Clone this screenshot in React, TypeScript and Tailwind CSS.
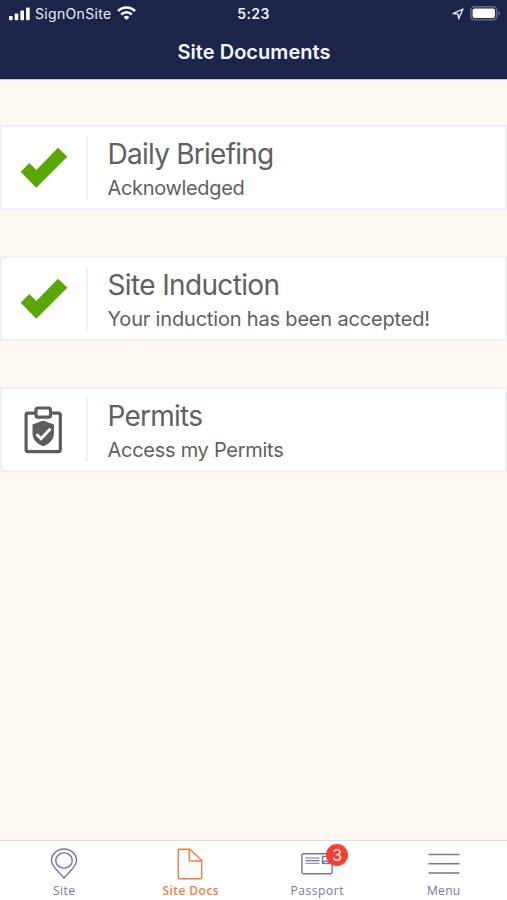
import type { ReactNode } from "react";

function StatusBar() {
  return (
    <div className="grid h-[27px] grid-cols-3 items-center text-[14px] leading-none text-[#e9eefb]">
      <div className="flex items-center pl-[9px]">
        <svg width="21" height="14" viewBox="0 0 21 14" fill="#fff">
          <rect x="0" y="9" width="3.6" height="4.2" rx="0.8" />
          <rect x="5.7" y="6.5" width="3.6" height="6.7" rx="0.8" />
          <rect x="11.4" y="3.5" width="3.6" height="9.7" rx="0.8" />
          <rect x="17.1" y="0.4" width="3.6" height="12.8" rx="0.8" />
        </svg>
        <span className="ml-[5px] w-[82px] whitespace-nowrap tracking-[0.32px]">SignOnSite</span>
        <svg width="19" height="15" viewBox="0 0 19 15" fill="none" stroke="#fff" strokeWidth="2.5">
          <path d="M1 5a12 12 0 0 1 17 0" />
          <path d="M4.2 8.5a7.5 7.5 0 0 1 10.6 0" />
          <path d="M6.7 11.2a4 4 0 0 1 5.6 0L9.5 14z" fill="#fff" stroke="none" />
        </svg>
      </div>
      <div className="text-center font-semibold tracking-[0.4px]">5:23</div>
      <div className="flex items-center justify-end pr-[6px]">
        <svg width="12" height="12" viewBox="0 0 12 12" fill="none" stroke="#e9eefb" strokeWidth="1.3" strokeLinejoin="round">
          <path d="M1 5.6 11 1 6.6 11 6.1 6.2z" />
        </svg>
        <svg className="ml-[6px]" width="31" height="15" viewBox="0 0 31 15">
          <rect x="0.8" y="0.8" width="26" height="13" rx="3.8" fill="none" stroke="#656b8b" strokeWidth="1.5" />
          <rect x="2.6" y="2.6" width="22.4" height="9.4" rx="2" fill="#fff" />
          <path d="M28.3 5.2c2.4.8 2.4 3.6 0 4.4z" fill="#656b8b" />
        </svg>
      </div>
    </div>
  );
}

function Check() {
  return (
    <svg width="48" height="42" viewBox="0 0 48 42">
      <path d="M.7 24.7 9.3 16l7 7L38 .7l9.3 9-31 31z" fill="#58a704" />
    </svg>
  );
}

function Clipboard() {
  return (
    <svg className="mr-px" width="39" height="48" viewBox="0 0 39 48" fill="none" stroke="#5c5c5c" strokeWidth="3.2">
      <path d="M11 7.2H3.6a1.5 1.5 0 0 0-1.5 1.5v35.4a1.5 1.5 0 0 0 1.5 1.5h31.2a1.5 1.5 0 0 0 1.5-1.5V8.7a1.5 1.5 0 0 0-1.5-1.5H27" />
      <rect x="12" y="2" width="14.5" height="9.2" rx="2" />
      <path d="M19.2 14.4 29.9 18.6v8.8c0 6-4.5 10.4-10.7 12.9C13 37.8 8.5 33.4 8.5 27.4v-8.8z" fill="#5c5c5c" stroke="none" />
      <path d="m12.5 28.2 4.6 4.5 9.3-10" stroke="#fff" strokeWidth="3" />
    </svg>
  );
}

type CardProps = { icon: ReactNode; title: string; detail: string; titleClass: string; detailClass: string };

function DocumentCard({ icon, title, detail, titleClass, detailClass }: CardProps) {
  return (
    <section className="flex h-[85px] items-center border-2 border-[#eff1f4] bg-white text-[#606060]">
      <div className="flex h-[64px] w-[86px] shrink-0 items-center justify-center border-r-2 border-[#f1f2f5]">{icon}</div>
      <div className="pt-[2px] pl-[19.5px] whitespace-nowrap">
        <h2 className={`text-[28px] leading-[38px] font-[380] ${titleClass}`}>{title}</h2>
        <p className={`text-[20px] leading-[30px] ${detailClass}`}>{detail}</p>
      </div>
    </section>
  );
}

function Tab({ icon, label, className }: { icon: ReactNode; label: string; className: string }) {
  return (
    <div className={`flex w-[126.5px] flex-col items-center pt-[6px] ${className}`}>
      <div className="flex h-[34px] shrink-0 items-center">{icon}</div>
      <span className="font-['Open_Sans',sans-serif] text-[12px] leading-[20px] whitespace-nowrap">{label}</span>
    </div>
  );
}

export default function App() {
  return (
    <div className="flex h-[900px] w-full flex-col overflow-hidden bg-[#fff9f4] font-['Inter',sans-serif]">
      <header className="h-[79px] shrink-0 bg-[#1b2549]">
        <StatusBar />
        <h1 className="pt-[10px] pl-px text-center text-[20px] leading-[30px] font-semibold tracking-[0.04px] text-[#f4f7ff]">Site Documents</h1>
      </header>
      <main className="flex flex-1 flex-col gap-[46px] border-t border-[#c5c9d1] pt-[45px]">
        <DocumentCard icon={<Check />} title="Daily Briefing" detail="Acknowledged" titleClass="tracking-[-0.75px]" detailClass="tracking-[-0.34px]" />
        <DocumentCard icon={<Check />} title="Site Induction" detail="Your induction has been accepted!" titleClass="tracking-[-0.64px]" detailClass="tracking-[-0.18px]" />
        <DocumentCard icon={<Clipboard />} title="Permits" detail="Access my Permits" titleClass="tracking-[-0.75px]" detailClass="tracking-[-0.27px]" />
      </main>
      <nav className="flex h-[60px] shrink-0 border-t border-[#dfdfe0] bg-white pl-px">
        <Tab
          label="Site"
          className="font-medium tracking-[0.5px] text-[#7376a3]"
          icon={
            <svg width="28" height="32" viewBox="0 0 28 32" fill="none" stroke="currentColor" strokeWidth="1.4">
              <path d="M14 30C10 25 1.5 19 1.5 12.5a12.5 11.5 0 0 1 25 0C26.5 19 18 25 14 30z" />
              <ellipse cx="14" cy="12.5" rx="8.3" ry="7.6" />
            </svg>
          }
        />
        <Tab
          label="Site Docs"
          className="font-semibold tracking-[0.45px] text-[#f27c3c]"
          icon={
            <svg className="mr-[2px]" width="26" height="32" viewBox="0 0 26 32" fill="none" stroke="currentColor" strokeWidth="1.4" strokeLinejoin="round">
              <path d="M2.5 1.2H13L24.7 12.5v16.8a1.5 1.5 0 0 1-1.5 1.5H2.7a1.5 1.5 0 0 1-1.5-1.5V2.5a1.3 1.3 0 0 1 1.3-1.3z" />
              <path d="M12.2 1.2v10.3a1.5 1.5 0 0 0 1.5 1.5h11" />
            </svg>
          }
        />
        <Tab
          label="Passport"
          className="font-medium tracking-[0.55px] text-[#7376a3]"
          icon={
            <div className="relative">
              <svg width="32" height="23" viewBox="0 0 32 23" fill="none" stroke="currentColor" strokeWidth="1.4">
                <rect x="0.9" y="0.8" width="30.2" height="20" rx="1.5" />
                <path d="M4.5 5h14M4.5 7.6h14M4.5 10.2h14" strokeWidth="1.1" />
                <rect x="21.5" y="3.5" width="7" height="7" />
                <path d="M22 9.8c1-2.5 5-2.5 6 0" />
              </svg>
              <span className="absolute -top-[9px] left-[25px] flex h-[22px] w-[22px] items-center justify-center rounded-full bg-[#fe3c30] text-[16px] leading-none font-normal tracking-normal text-white">3</span>
            </div>
          }
        />
        <Tab
          label="Menu"
          className="font-medium tracking-[0.3px] text-[#7376a3]"
          icon={
            <svg width="32" height="22" viewBox="0 0 32 22" stroke="currentColor" strokeWidth="1.5">
              <path d="M.5 1.5h31M.5 10.7h31M.5 19.9h31" />
            </svg>
          }
        />
      </nav>
    </div>
  );
}
